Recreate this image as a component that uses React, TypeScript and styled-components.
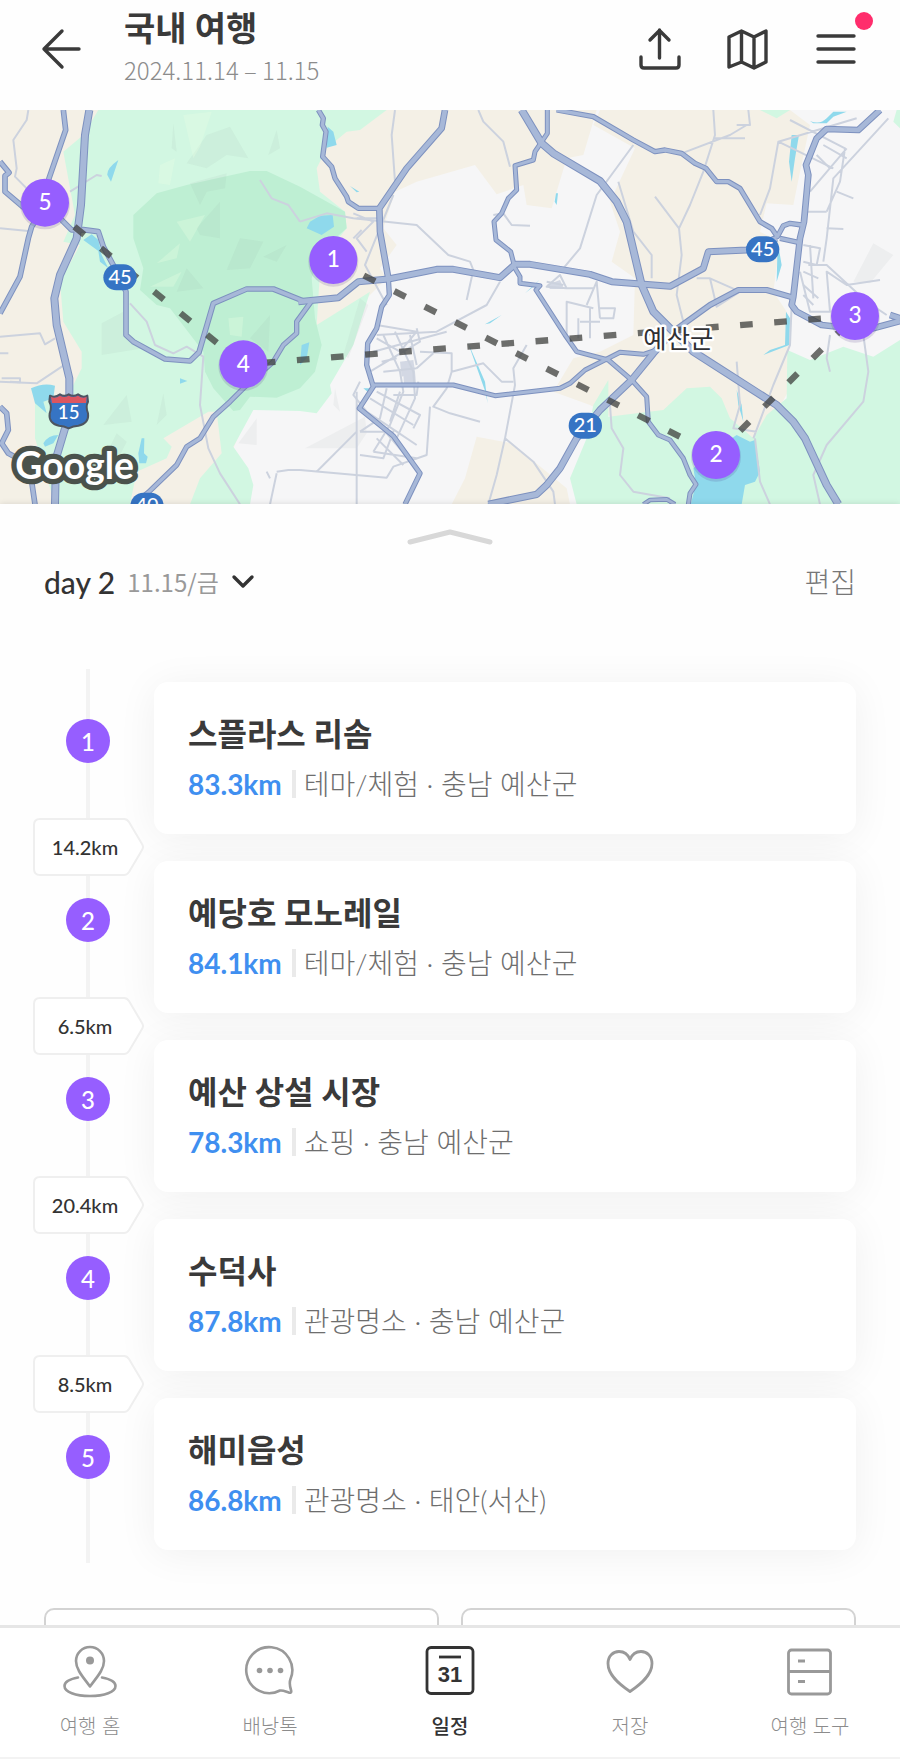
import React from "react";
import styled, { createGlobalStyle } from "styled-components";

const GlobalStyle = createGlobalStyle`
  * { box-sizing: border-box; }
  body {
    margin: 0;
    background: #fefefe;
    color: #3a3a3a;
    font-family: Lato, "Noto Sans CJK KR", sans-serif;
  }
  button { font: inherit; color: inherit; background: none; border: 0; padding: 0; cursor: pointer; }
  h1, h2, p, ol { margin: 0; padding: 0; }
`;

const Shell = styled.div`
  display: flex;
  flex-direction: column;
  height: 100vh;
`;

const Header = styled.header`
  display: flex;
  align-items: center;
  height: 110px;
  flex: none;
  padding: 0 40px 12px;
`;

const Heading = styled.div`
  flex: 1;
  margin-left: 43px;
`;

const TripTitle = styled.h1`
  font-size: 34px;
  line-height: 42px;
  font-weight: 700;
`;

const TripDates = styled.p`
  font-family: "Noto Sans CJK KR", sans-serif;
  font-size: 24px;
  line-height: 42px;
  font-weight: 300;
  color: #8c8c8c;
`;

const Actions = styled.div`
  display: flex;
  gap: 40px;
`;

const IconButton = styled.button`
  position: relative;
  display: flex;
  width: 48px;
  height: 48px;
  align-items: center;
  justify-content: center;
`;

const BackButton = styled(IconButton)`
  width: 41px;
`;

const Badge = styled.span`
  position: absolute;
  top: -13px;
  right: -13px;
  width: 18px;
  height: 18px;
  border-radius: 50%;
  background: #ff2d6c;
`;

const Scroll = styled.main`
  flex: 1;
  min-height: 0;
  overflow-y: auto;
  scrollbar-width: none;
  display: flex;
  flex-direction: column;
`;

const MapSvg = styled.svg`
  display: block;
  flex: none;
  width: 100%;
  height: 394px;
`;

const Sheet = styled.section`
  display: flex;
  flex-direction: column;
  flex: none;
  box-shadow: 0 0 6px rgba(0, 0, 0, 0.12);
`;

const Handle = styled.button`
  display: flex;
  height: 58px;
  justify-content: center;
  align-items: center;
  padding-top: 10px;
`;

const DayBar = styled.div`
  display: flex;
  height: 40px;
  align-items: center;
  justify-content: space-between;
  padding: 0 44px;
  font-size: 28px;
  line-height: 40px;
`;

const DayPicker = styled.button`
  display: flex;
  align-items: center;
  gap: 12px;
  color: #333;
  font-weight: 500;
`;

const DayName = styled.span`
  font-size: 30px;
`;

const DayDate = styled.span`
  font-family: "Noto Sans CJK KR", sans-serif;
  font-size: 24px;
  color: #999;
  font-weight: 400;
`;

const EditButton = styled.button`
  color: #777;
  font-weight: 300;
`;

const Stops = styled.ol`
  list-style: none;
  display: flex;
  flex-direction: column;
  gap: 27px;
  margin: 67px 44px 0 32px;
  padding: 13px 0;
  background: linear-gradient(#f3f3f3, #f3f3f3) 54px 0 / 4px 100% no-repeat;
`;

const Stop = styled.li`
  position: relative;
  display: flex;
  align-items: flex-start;
`;

const Rail = styled.div`
  flex: none;
  width: 122px;
  padding: 37px 0 0 34px;
`;

const StopNumber = styled.span`
  display: flex;
  align-items: center;
  justify-content: center;
  width: 44px;
  height: 44px;
  border-radius: 50%;
  background: #965eff;
  color: #fff;
  font-size: 24px;
  font-weight: 500;
`;

const Leg = styled.div`
  position: absolute;
  left: 0;
  bottom: -42px;
  width: 112px;
  height: 58px;
  display: flex;
  align-items: center;
  justify-content: center;
  padding-right: 6px;
  font-size: 20px;
  font-weight: 500;
  color: #333;
`;

const LegShape = styled.svg`
  position: absolute;
  inset: 0;
`;

const LegText = styled.span`
  position: relative;
`;

const Card = styled.article`
  flex: 1;
  padding: 28px 34px 32px;
  border-radius: 14px;
  background: #fff;
  box-shadow: 0 4px 40px rgba(0, 0, 0, 0.06);
`;

const StopName = styled.h2`
  font-size: 32px;
  line-height: 48px;
  font-weight: 700;
  margin-bottom: 8px;
`;

const Meta = styled.p`
  display: flex;
  align-items: center;
  font-size: 28px;
  line-height: 36px;
  font-weight: 300;
  color: #6e6e6e;
  white-space: nowrap;
`;

const Distance = styled.strong`
  color: #3f8ff0;
  font-weight: 700;
  padding-right: 10px;
  margin-right: 12px;
  position: relative;
  &::after {
    content: "";
    position: absolute;
    right: -4px;
    top: 4px;
    width: 4px;
    height: 28px;
    background: #eaeaea;
  }
`;

const AddRow = styled.div`
  display: flex;
  flex: none;
  gap: 22px;
  padding: 0 44px 40px;
  margin-top: 45px;
`;

const AddButton = styled.button`
  flex: 1;
  height: 80px;
  border: 2px solid #d3d3d3;
  border-radius: 10px;
  background: #fff;
`;

const TabBar = styled.nav`
  display: grid;
  grid-template-columns: repeat(5, 1fr);
  flex: none;
  height: 134px;
  background: #fff;
  border-top: 3px solid #e6e6e6;
  border-bottom: 2px solid #f3f3f3;
`;

const Tab = styled.button<{ $active?: boolean }>`
  display: flex;
  flex-direction: column;
  align-items: center;
  padding-top: 15px;
  gap: 13px;
  font-size: 20px;
  line-height: 28px;
  font-weight: ${(p) => (p.$active ? 500 : 300)};
  color: ${(p) => (p.$active ? "#333" : "#8c8c8c")};
`;

const BackIcon = () => (
  <svg width="40" height="42" viewBox="0 0 40 42" fill="none" stroke="#3a3a3a" strokeWidth="3.400" strokeLinecap="round" strokeLinejoin="round">
    <path d="M38 21H3M21 3 3 21l18 18" />
  </svg>
);

const UploadIcon = () => (
  <svg width="42" height="42" viewBox="0 0 42 42" fill="none" stroke="#3a3a3a" strokeWidth="3.400" strokeLinecap="round" strokeLinejoin="round">
    <path d="M2 29v8q0 3 3 3h32q3 0 3-3v-8M20.500 30V2M11 12l9.500-9.500L30 12" />
  </svg>
);

const MapIcon = () => (
  <svg width="42" height="42" viewBox="0 0 42 42" fill="none" stroke="#3a3a3a" strokeWidth="3.400" strokeLinecap="round" strokeLinejoin="round">
    <path d="M2 9 14.500 3 27 9l12-6v31L27 40l-12.500-6L2 39zM14.500 3v31M27 9v31" />
  </svg>
);

const MenuIcon = () => (
  <svg width="42" height="32" viewBox="0 0 42 32" stroke="#3a3a3a" strokeWidth="3.400" strokeLinecap="round">
    <path d="M3 3h36M3 16h36M3 29h36" />
  </svg>
);

const tabIcons = {
  home: (
    <svg width="56" height="56" viewBox="0 0 56 56" fill="none" stroke="#999" strokeWidth="2.600" strokeLinecap="round" strokeLinejoin="round">
      <path d="M28 43.500C22 35 14 27 14 18a14 14 0 0 1 28 0c0 9-8 17-14 25.500z" />
      <circle cx="28" cy="17.500" r="4" fill="#999" stroke="none" />
      <path d="M16 34.500C8 36 2.500 39 2.500 43c0 6 11 10 25.500 10s25.500-4 25.500-10c0-4-5.500-7-13.500-8.500" />
    </svg>
  ),
  talk: (
    <svg width="56" height="56" viewBox="0 0 56 56" fill="none" stroke="#999" strokeWidth="2.600" strokeLinecap="round" strokeLinejoin="round">
      <path d="M38 47.500A23 23 0 1 1 48.500 36c-1.500 4-.5 8 .6 11.500.5 1.700-.4 2.500-1.800 2.200-3-.8-6-2.700-9.300-2.200z" />
      <g fill="#999" stroke="none">
        <circle cx="17.500" cy="27.500" r="2.800" />
        <circle cx="28" cy="27.500" r="2.800" />
        <circle cx="38.500" cy="27.500" r="2.800" />
      </g>
    </svg>
  ),
  plan: (
    <svg width="56" height="56" viewBox="0 0 56 56" fill="none" stroke="#333" strokeWidth="2.800" strokeLinecap="round">
      <rect x="5" y="4.500" width="46" height="46" rx="4" />
      <path d="M17 14h22" strokeLinecap="butt" />
      <text x="28" y="39" textAnchor="middle" fontFamily="Liberation Sans, sans-serif" fontSize="22" fontWeight="700" fill="#333" stroke="none">31</text>
    </svg>
  ),
  saved: (
    <svg width="56" height="56" viewBox="0 0 56 56" fill="none" stroke="#999" strokeWidth="2.800" strokeLinejoin="round">
      <path d="M28 48.500C17 41 6 32 6 20.500 6 13 11 8.500 17 8.500c5 0 9 3 11 8 2-5 6-8 11-8 6 0 11 4.500 11 12C50 32 39 41 28 48.500z" />
    </svg>
  ),
  tools: (
    <svg width="56" height="56" viewBox="0 0 56 56" fill="none" stroke="#999" strokeWidth="2.800">
      <rect x="6.500" y="7" width="42" height="44" rx="3" />
      <path d="M6.500 28.500h42M16 18h7M16 38.500h7" />
    </svg>
  ),
};

/* The map is drawn at three units per pixel. */
type Road = [number, string];

const roads: Road[] = [
  [24, "M268 15 255 90 243 300 230 400 180 510 163 580 170 660 208 820 208 900 195 970 168 1060 165 1198"],
  [17, "M190 15 197 75 147 220 135 300 95 365 85 400 60 515 0 625"],
  [17, "M0 170 27 203 15 212 15 260 80 315 180 340 215 375 250 374 295 380 310 425 345 490 378 560 378 690 400 710 495 762 570 768 597 742 640 595 740 552 820 552 915 590"],
  [21, "M895 590 1015 578 1075 530 1165 522 1310 493 1360 493 1500 518 1545 478 1590 478 1770 508 1835 530 2010 544 2110 490 2125 440 2240 435 2330 400"],
  [16, "M932 592 890 650 890 685 850 720 820 770 730 850 690 890 640 935 600 1000 560 1025 530 1080 445 1162 400 1198"],
  [17, "M0 905 20 925 25 975 5 1015 25 1045 90 1080 95 1130 105 1198"],
  [16, "M955 15 970 40 967 60 978 80 968 155 995 185 1005 220 1040 275 1045 290 1075 310 1140 310"],
  [20, "M1335 15 1325 70 1220 190 1138 310 1140 380 1165 520"],
  [16, "M1165 520 1168 570 1145 605 1130 670 1103 715 1100 780 1120 845 1078 910 1180 993 1260 1105 1215 1198"],
  [15, "M1120 840 1360 840 1485 872 1680 850 1710 835 1755 795 1860 742 1930 748 1970 735"],
  [15, "M1642 15 1642 85 1605 140 1600 165 1545 182 1550 255 1525 280 1505 325 1482 350 1488 405 1532 440 1545 490 1560 515 1560 535 1620 542 1608 555 1695 690 1730 740 1825 765 1895 825 1940 875 1945 950 1975 990 2010 1005 2050 1060 2070 1110 2088 1138 2070 1165 2065 1198"],
  [24, "M1565 15 1625 115 1660 145 1800 228 1850 290 1880 350 1925 540 1960 620 2020 680 2080 740 2330 900 2380 950 2415 1000 2480 1140 2515 1198"],
  [16, "M1670 15 1780 35 1900 105 1965 140 1995 135 2045 145 2085 175 2118 190 2150 230 2185 230 2220 250 2280 350 2315 370 2332 395 2350 362 2370 355 2405 360M2340 400 2395 412"],
  [20, "M2640 15 2575 75 2480 72 2450 100 2418 180 2425 210 2412 350 2400 400 2380 575 2375 600 2390 620 2465 660 2600 675 2700 648M2670 630 2700 640"],
  [18, "M2030 672 2130 600 2215 555 2300 555 2380 578"],
  [22, "M2000 700 1960 745 1895 825 1800 915 1730 1000 1680 1090 1640 1140 1610 1168 1465 1198"],
  [14, "M1930 1198 1950 1185 2000 1183 2025 1198"],
];

const lanes =
  "M85 15 80 45 40 105 50 190 45 215 80 250M210 260 290 210 305 213M0 370 85 378M0 695 120 685 135 718 165 700M0 830 110 835 200 775M390 595 440 650 465 720 520 745 560 725 610 755 600 900 625 1030 660 1105 720 1198M780 225 815 280 865 300 900 350M830 1100 865 1095 900 1095M830 1105 810 1198" +
  "M1185 15 1175 90 1185 230M900 350 980 325 1060 340 1250 360 1345 450 1410 470 1420 495 1400 585M1180 270 1095 480 1160 600M1435 15 1450 50 1510 110 1530 185M1480 330 1510 325 1535 360 1590 362M1900 120 1790 270 1740 430 1690 490M1500 530 1460 600 1310 680 1130 690" +
  "M1800 640 1790 530 1760 600M1260 740 1355 745 1355 800 1450 775 1505 830 1540 830M1580 720 1540 790 1545 840 1515 1000 1490 1110 1465 1198M1355 800 1340 850 1300 905 1350 925 1440 950M1290 905 1280 1050 1180 1085 1160 1118 900 1095M1070 860 1070 1198M1070 980 970 1080 950 1100M1515 1000 1600 1070 1660 1160 1665 1198" +
  "M2245 15 2250 60 2210 60M2140 15 2145 90 2110 200 2070 300 2037 370 2045 450 2030 570 2050 650M1965 275 2037 370M2240 60 2190 90 2045 145M2145 100 2235 100M2370 45 2535 130 2520 230 2480 320M2570 40 2335 110 2310 250 2280 330M2665 40 2500 220 2480 400 2470 470M2430 260 2540 130M2335 110 2500 190M1855 230 1900 380 1955 450 1955 520" +
  "M2090 520 2130 520 2220 560 2150 605 2130 520M2375 600 2370 720 2320 840 2260 1000M2590 690 2605 800 2590 890 2480 1020 2440 1110 2460 1198M1830 900 1835 970 1870 1030 1860 1110 1900 1160 2010 1180M2265 1000 2280 1130 2310 1198M2210 770 2220 900 2200 970 2270 980M2400 500 2430 620 2490 620 2480 500 2540 540 2640 525M2425 480 2480 480 2600 590 2660 630M2490 690 2480 760 2490 800";

const townStreets =
  "M1130 660 1250 680 1200 740 1130 700M1120 740 1340 680M1110 800 1260 710 1250 670M1150 690 1200 800 1210 860 1170 960 1120 1040M1185 680 1240 800 1245 880 1190 1000M1230 690 1250 780M1080 830 1060 870 1100 920M1070 900 1190 980 1250 1020M1110 880 1240 960M1130 860 1260 930 1240 970M1160 850 1140 940 1080 980M1200 860 1170 950M1080 980 1180 980 1150 1060 1080 1050M1120 1040 1250 1060M1130 1000 1210 1080M1160 985 1220 1055M1145 770 1190 760M1150 800 1250 790M1180 870 1250 870 1255 830M1300 745 1250 790" +
  "M1640 545 1680 510 1700 550zM1640 530 1690 540M1700 550 1780 550M1700 690 1700 590 1780 610M1740 650 1800 650M1735 700 1735 640M1770 610 1770 700M1800 610 1845 610 1840 640 1800 640M1060 325 1120 350 1070 400 1100 440M1070 340 1140 340M1060 400 1085 375" +
  "M2410 420 2460 430 2450 480 2410 470M2430 420 2440 580M2410 500 2455 520M2410 540 2455 580M2410 570 2440 600M2450 150 2490 190M2470 120 2540 160M2510 260 2560 280M2480 370 2530 372M2420 320 2480 320M0 745 25 745M5 820 60 820 60 832 30 830M800 1100 810 1120";

const townBlocks = "M1200 770 1240 765 1245 800 1205 815ZM1210 808 1245 800 1248 838 1212 838ZM1640 540 1680 525 1692 552 1650 552Z";

const water =
  "M355 165 Q320 190 322 210L333 230ZM250 405 275 388 295 405 305 450 325 490 300 470 295 438ZM93 850Q130 832 165 842L160 880 130 890 140 925 105 895ZM130 1015Q145 990 175 990L160 1015 135 1025ZM540 820 562 828 540 836ZM425 1000 433 1000 432 1045 443 1055 438 1075 418 1075 415 1045ZM983 65 1000 80 1010 120 980 128ZM930 350 960 332 998 330 1002 365 965 390 920 370ZM905 720 928 712 920 760 900 780ZM1050 243 1078 260 1070 262ZM1090 850 1110 850 1108 865ZM1668 265 1674 265 1670 300 1664 290ZM1403 710 1455 830 1463 895 1456 860ZM1455 658 1505 630 1470 655ZM1575 565 1618 525 1600 545ZM2375 90 2397 90 2385 160 2375 230 2367 170ZM2430 48Q2460 60 2480 40L2500 20 2540 20 2500 35 2480 55 2440 55ZM2333 410 2345 480 2330 530ZM2358 620 2370 640 2368 720 2290 750 2310 735 2355 720ZM2210 855 2225 900 2230 950 2215 900ZM2080 1090 2150 1030 2210 990 2250 1010 2265 1005 2280 1100 2265 1130 2235 1140 2225 1198 2072 1198 2088 1138Z";

const shading =
  "M520 55 530 140 515 130ZM690 65 745 160 680 150 620 190 560 175 620 90ZM830 75 840 130 805 150ZM660 290 660 400 600 390 590 370ZM720 400 790 410 750 490 680 495ZM860 420 790 455 830 470ZM560 490 610 550 530 560ZM570 235 680 205 675 250 620 260 600 300ZM305 655 370 620 370 690 430 730 305 750ZM380 870 395 950 310 960ZM490 865 500 930 470 960ZM350 985 380 1010 360 1050 320 1045ZM810 630 805 740 750 700ZM770 940 770 1020 715 1015ZM1080 580 1105 600 1045 760 1030 750ZM1095 935 1100 985 1070 1030 915 1030ZM1005 850 1020 920 1000 900ZM2620 415 2680 450 2610 535 2560 530Z";

const pins = [
  { n: 1, x: 1000, y: 465 },
  { n: 2, x: 2148, y: 1050 },
  { n: 3, x: 2565, y: 633 },
  { n: 4, x: 730, y: 778 },
  { n: 5, x: 135, y: 293 },
];

const routeShields = [
  { n: "45", x: 360, y: 517 },
  { n: "21", x: 1756, y: 962 },
  { n: "45", x: 2288, y: 433 },
  { n: "40", x: 441, y: 1202 },
];

const TripMap = () => (
  <MapSvg viewBox="0 15 2700 1182" preserveAspectRatio="xMidYMid slice" role="img" aria-label="예산군">
    <rect y="15" width="2700" height="1183" fill="#f6f6f7" />
    <path
      fill="#f4f0e6"
      d="M0 15H1790L1750 150 1700 160 1655 310 1580 300 1570 240 1490 268 1425 180 1250 230 1185 260 1150 370 1190 420 1140 490 1160 520 1080 600 1000 640 900 700 750 915 700 1030 640 1198H0ZM1800 15H2370L2430 60 2400 200 2380 300 2300 295 2280 380 2340 410 2320 560 2360 620 2370 850 2270 1030 2180 990 1960 920 1840 940 1770 900 1660 860 1720 760 1800 740 1900 690 1905 520 1835 470 1860 380 1830 290 1905 130 1780 60ZM1430 995 1535 1015 1640 1100 1700 1150 1710 1198H1355L1395 1120Z"
    />
    <path
      fill="#d2f7e2"
      d="M295 15H1160L1080 75 1040 80 980 130 950 190 960 260 1035 320 1040 370 1000 420 960 500 950 660 1110 560 1060 720 990 840 995 865 950 925 900 918 760 915 700 1025 745 1090 760 1140 750 1198H570L600 1120 665 1045 650 920 625 920 490 1000 515 1025 500 1060 410 1100 390 1198H165L105 1000V890L200 880 245 790 245 740 190 650 180 530 240 420 190 410 225 330 190 140 250 90ZM1780 900 1825 825V935L1990 915 2060 850 2130 845 2165 880 2190 940 2260 1000 2300 930 2360 880 2362 735 2430 765 2530 725 2620 755 2700 705V1198H2050L1730 1198 1710 1120 1760 1000ZM2280 15H2370L2330 40ZM2690 15H2700V70L2680 50Z"
    />
    <path
      fill="#beefd3"
      d="M400 330 470 265 560 240 750 198 800 198 900 245 1035 320 1040 370 960 440 935 520 945 640 965 720 945 800 900 850 830 878 750 875 720 915 700 918 640 850 615 800 610 740 510 610 470 600 420 555 430 490 400 400Z"
    />
    <path fill="#7b8794" fillOpacity=".07" d={shading} />
    <path fill="#eaffe6" fillOpacity=".3" d="M530 350 615 330 570 410ZM540 415 530 460 470 475ZM450 545 545 500 520 545ZM480 180 525 160 510 240 475 235ZM550 30 635 20 600 125 580 160ZM685 640 730 635 725 695 690 690Z" />
    <path fill="#8fd9ec" d={water} />
    <path fill="#cbd1de" fillOpacity=".8" d={townBlocks} />
    <g fill="none" stroke="#ccd2de" strokeWidth="6" strokeLinejoin="round">
      <path d={lanes} />
      <path d={townStreets} />
    </g>
    <g fill="none" strokeLinejoin="round">
      {roads.map(([w, d]) => (
        <path key={"edge" + d} d={d} stroke="#7d91bf" strokeWidth={w} />
      ))}
      {roads.map(([w, d]) => (
        <path key={"fill" + d} d={d} stroke="#a7b8d8" strokeWidth={w - 6} />
      ))}
    </g>
    <path
      d="M1000 465 2148 1050M2148 1050 2565 633M2565 633 730 778M730 778 135 293"
      fill="none"
      stroke="#3d3f3c"
      strokeOpacity=".75"
      strokeWidth="19"
      strokeDasharray="38 64.600"
    />
    <g fontFamily="Lato, sans-serif" textAnchor="middle" fill="#fff">
      {routeShields.map((s) => (
        <g key={s.n + s.x}>
          <rect x={s.x - 50} y={s.y - 39} width="100" height="78" rx="39" fill="#3674c4" />
          <text x={s.x} y={s.y + 20} fontSize="60" fontWeight="500">{s.n}</text>
        </g>
      ))}
      <path
        d="M150 872Q165 880 180 868 192 877 206 868 220 877 234 868 248 880 262 872L264 890Q256 905 264 925 268 955 235 962 220 963 206 970 192 963 177 962 145 955 149 925 157 905 148 890Z"
        fill="#3674c4"
        stroke="#4d5561"
        strokeWidth="6"
        strokeLinejoin="round"
      />
      <path d="M153 875Q165 882 180 872 192 880 206 872 220 880 234 872 248 882 260 875L258 894H156Z" fill="#dc5660" />
      <text x="206" y="942" fontSize="56" fontWeight="500">15</text>
    </g>
    <text
      x="1930"
      y="730"
      fontFamily="Noto Sans CJK KR, sans-serif"
      fontSize="76"
      fontWeight="400"
      fill="#2f3033"
      stroke="#fff"
      strokeWidth="14"
      strokeLinejoin="round"
      paintOrder="stroke"
    >
      예산군
    </text>
    <text
      x="46"
      y="1122"
      fontFamily="Lato, sans-serif"
      fontSize="112"
      fontWeight="700"
      fill="#fff"
      stroke="#4a524c"
      strokeWidth="32"
      strokeLinejoin="round"
      paintOrder="stroke"
    >
      Google
    </text>
    <g fontFamily="Lato, sans-serif" textAnchor="middle" fontSize="68" fontWeight="500">
      {pins.map((p) => (
        <g key={p.n}>
          <circle cx={p.x} cy={p.y + 5} r="75" fill="#4a3380" fillOpacity=".16" />
          <circle cx={p.x} cy={p.y} r="72" fill="#965eff" />
          <text x={p.x} y={p.y + 22} fill="#fff">{p.n}</text>
        </g>
      ))}
    </g>
  </MapSvg>
);

const stops = [
  { name: "스플라스 리솜", km: "83.3km", place: "테마/체험 · 충남 예산군", leg: "14.2km" },
  { name: "예당호 모노레일", km: "84.1km", place: "테마/체험 · 충남 예산군", leg: "6.5km" },
  { name: "예산 상설 시장", km: "78.3km", place: "쇼핑 · 충남 예산군", leg: "20.4km" },
  { name: "수덕사", km: "87.8km", place: "관광명소 · 충남 예산군", leg: "8.5km" },
  { name: "해미읍성", km: "86.8km", place: "관광명소 · 태안(서산)" },
];

const tabs: { label: string; icon: keyof typeof tabIcons; active?: boolean }[] = [
  { label: "여행 홈", icon: "home" },
  { label: "배낭톡", icon: "talk" },
  { label: "일정", icon: "plan", active: true },
  { label: "저장", icon: "saved" },
  { label: "여행 도구", icon: "tools" },
];

export default function App() {
  return (
    <Shell>
      <GlobalStyle />
      <Header>
        <BackButton aria-label="뒤로"><BackIcon /></BackButton>
        <Heading>
          <TripTitle>국내 여행</TripTitle>
          <TripDates>2024.11.14 – 11.15</TripDates>
        </Heading>
        <Actions>
          <IconButton aria-label="공유"><UploadIcon /></IconButton>
          <IconButton aria-label="지도"><MapIcon /></IconButton>
          <IconButton aria-label="메뉴"><MenuIcon /><Badge /></IconButton>
        </Actions>
      </Header>
      <Scroll>
        <TripMap />
        <Sheet>
          <Handle aria-label="펼치기">
            <svg width="86" height="18" viewBox="0 0 86 18" fill="none" stroke="#d8d8d8" strokeWidth="5" strokeLinecap="round" strokeLinejoin="round">
              <path d="M3 13 43 3l40 10" />
            </svg>
          </Handle>
          <DayBar>
            <DayPicker>
              <DayName>day 2</DayName>
              <DayDate>11.15/금</DayDate>
              <svg width="24" height="16" viewBox="0 0 24 16" fill="none" stroke="#333" strokeWidth="3.400" strokeLinecap="round" strokeLinejoin="round">
                <path d="m3 3 9 9 9-9" />
              </svg>
            </DayPicker>
            <EditButton>편집</EditButton>
          </DayBar>
          <Stops>
            {stops.map((s, i) => (
              <Stop key={s.name}>
                <Rail><StopNumber>{i + 1}</StopNumber></Rail>
                <Card>
                  <StopName>{s.name}</StopName>
                  <Meta>
                    <Distance>{s.km}</Distance>
                    {s.place}
                  </Meta>
                </Card>
                {s.leg && (
                  <Leg>
                    <LegShape width="112" height="58" viewBox="0 0 112 58" fill="#fff" stroke="#efefef" strokeWidth="2">
                      <path d="M8 1h84q3 0 5 3l13 22q2 3 0 6L97 54q-2 3-5 3H8q-6 0-6-6V7q0-6 6-6z" />
                    </LegShape>
                    <LegText>{s.leg}</LegText>
                  </Leg>
                )}
              </Stop>
            ))}
          </Stops>
          <AddRow>
            <AddButton aria-label="장소 추가" />
            <AddButton aria-label="메모 추가" />
          </AddRow>
        </Sheet>
      </Scroll>
      <TabBar>
        {tabs.map((t) => (
          <Tab key={t.label} $active={t.active}>
            {tabIcons[t.icon]}
            {t.label}
          </Tab>
        ))}
      </TabBar>
    </Shell>
  );
}
